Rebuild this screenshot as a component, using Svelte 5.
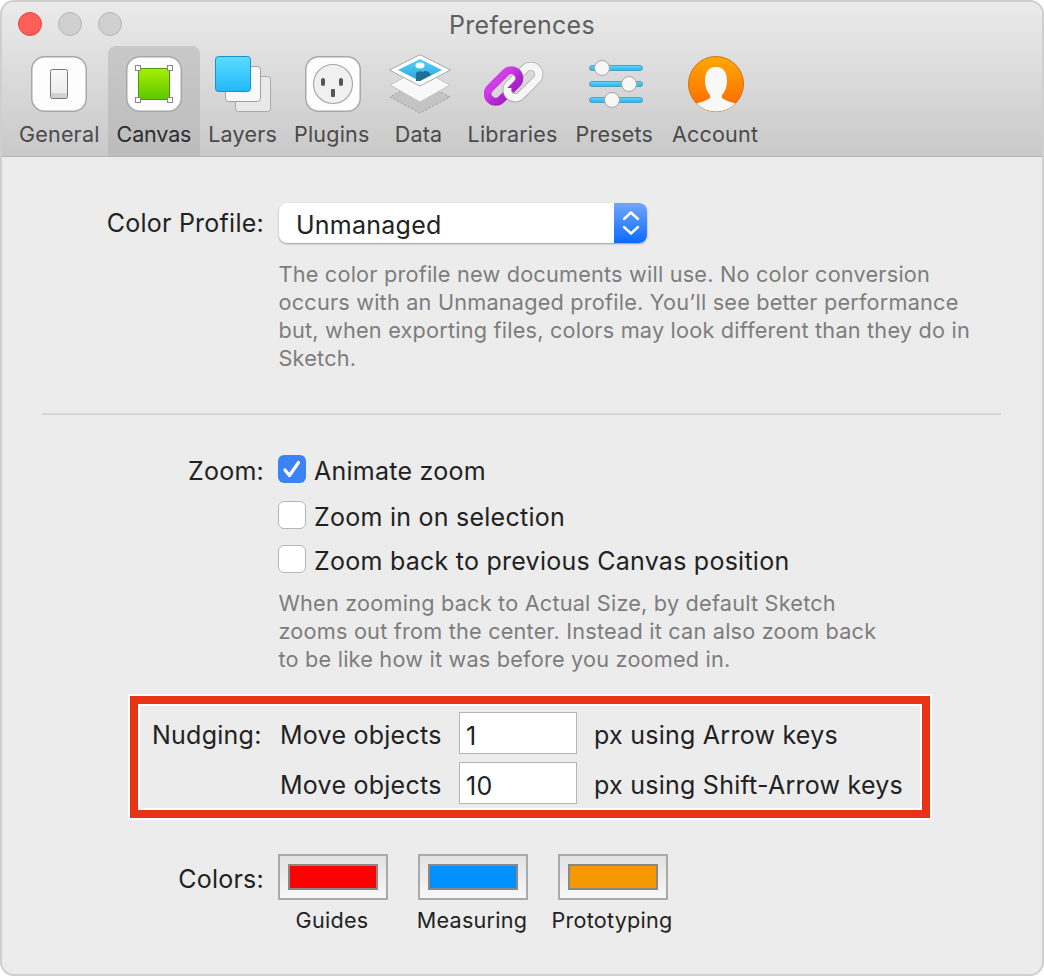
<script>
  const tabs = ["General", "Canvas", "Layers", "Plugins", "Data", "Libraries", "Presets", "Account"];
  const colors = [
    { name: "Guides", value: "#ff0000" },
    { name: "Measuring", value: "#0090ff" },
    { name: "Prototyping", value: "#f59700" }
  ];
</script>

<div class="window">
  <header class="toolbar">
    <div class="titlebar">
      <div class="lights">
        <span class="light close"></span>
        <span class="light"></span>
        <span class="light"></span>
      </div>
      <div class="title">Preferences</div>
    </div>
    <nav class="tabs">
      {#each tabs as tab}
        <div class="tab tab-{tab.toLowerCase()}" class:active={tab === "Canvas"}>
          <div class="icon">
            {#if tab === "General"}
              <svg width="56" height="56" viewBox="0 0 56 56">
                <defs>
                  <linearGradient id="sw" x1="0" y1="0" x2="0" y2="1">
                    <stop offset="0" stop-color="#fafafa" /><stop offset="0.8" stop-color="#ececec" /><stop offset="0.8" stop-color="#d4d4d4" /><stop offset="1" stop-color="#cfcfcf" />
                  </linearGradient>
                </defs>
                <rect x="0.75" y="0.75" width="54.5" height="54.5" rx="13" fill="#fdfdfd" stroke="#a8a8a8" stroke-width="1.5" />
                <rect x="19.5" y="13.5" width="17" height="29" rx="2" fill="url(#sw)" stroke="#777" />
              </svg>
            {:else if tab === "Canvas"}
              <svg width="56" height="56" viewBox="0 0 56 56">
                <defs>
                  <linearGradient id="gr" x1="0" y1="0" x2="0" y2="1">
                    <stop offset="0" stop-color="#a8ee00" /><stop offset="1" stop-color="#5cc800" />
                  </linearGradient>
                </defs>
                <rect x="0.75" y="0.75" width="54.5" height="54.5" rx="13" fill="#fdfdfd" stroke="#a8a8a8" stroke-width="1.5" />
                <rect x="12.5" y="12.5" width="31" height="31" fill="url(#gr)" stroke="#4f9a00" />
                <rect x="9.5" y="9.5" width="5" height="5" fill="#fff" stroke="#888" />
                <rect x="41.5" y="9.5" width="5" height="5" fill="#fff" stroke="#888" />
                <rect x="9.5" y="41.5" width="5" height="5" fill="#fff" stroke="#888" />
                <rect x="41.5" y="41.5" width="5" height="5" fill="#fff" stroke="#888" />
              </svg>
            {:else if tab === "Layers"}
              <svg width="56" height="56" viewBox="0 0 56 56">
                <defs>
                  <linearGradient id="bl" x1="0" y1="0" x2="0" y2="1">
                    <stop offset="0" stop-color="#5cdcff" /><stop offset="1" stop-color="#22b8fb" />
                  </linearGradient>
                </defs>
                <rect x="20.5" y="20.5" width="35" height="35" rx="3" fill="#e9e9e9" stroke="#a8a8a8" />
                <rect x="10.5" y="10.5" width="35" height="35" rx="3" fill="#f8f8f8" stroke="#a0a0a0" />
                <rect x="0.5" y="0.5" width="35" height="35" rx="3" fill="url(#bl)" stroke="#1c8fc8" />
              </svg>
            {:else if tab === "Plugins"}
              <svg class="nudge-1" width="56" height="56" viewBox="0 0 56 56">
                <rect x="0.75" y="0.75" width="54.5" height="54.5" rx="13" fill="#fdfdfd" stroke="#a8a8a8" stroke-width="1.5" />
                <circle cx="28" cy="28" r="19.5" fill="#f0f0f0" stroke="#aaa" stroke-width="1.2" />
                <rect x="16" y="22" width="4" height="8" rx="2" fill="#555" />
                <rect x="34" y="22" width="4" height="8" rx="2" fill="#555" />
                <rect x="26" y="33" width="4" height="8" rx="1" fill="#555" />
              </svg>
            {:else if tab === "Data"}
              <svg class="data-icon nudge-1" width="62" height="60" viewBox="0 0 62 60">
                <defs>
                  <linearGradient id="sky" x1="0" y1="0" x2="0" y2="1">
                    <stop offset="0" stop-color="#55d2f8" /><stop offset="1" stop-color="#2aa4dc" />
                  </linearGradient>
                </defs>
                <path d="M31 27 L61 43 L31 59 L1 43 Z" fill="#c4c4c4" stroke="#999" stroke-dasharray="2 2" />
                <path d="M31 15 L61 31 L31 48 L1 31 Z" fill="#f8f8f8" stroke="#c4c4c4" />
                <path d="M31 0.7 L61.5 16 L31 32 L0.5 16 Z" fill="#fff" stroke="#a8a8a8" />
                <path d="M31 5 L53 16 L31 27 L9 16 Z" fill="url(#sky)" />
                <ellipse cx="31" cy="11.5" rx="4.5" ry="3" fill="#fff" />
                <path d="M27 27 L27 19 Q30 16 34 18 Q38 15 42 21 L31 27 Z" fill="#1e6f92" />
              </svg>
            {:else if tab === "Libraries"}
              <svg class="libraries-icon nudge-1" width="60" height="46" viewBox="0 0 60 46">
                <defs>
                  <linearGradient id="pu" x1="0" y1="0" x2="0" y2="1">
                    <stop offset="0" stop-color="#d13ee8" /><stop offset="1" stop-color="#a922c8" />
                  </linearGradient>
                  <clipPath id="low"><rect x="18" y="26" width="26" height="20" /></clipPath>
                </defs>
                <g transform="rotate(-45 39 20)">
                  <rect x="20" y="12" width="38" height="16" rx="8" fill="none" stroke="#a8a8a8" stroke-width="9" />
                  <rect x="20" y="12" width="38" height="16" rx="8" fill="none" stroke="#f6f6f6" stroke-width="7.5" />
                </g>
                <g transform="rotate(-45 19.5 24)">
                  <rect x="0.5" y="16" width="38" height="16" rx="8" fill="none" stroke="url(#pu)" stroke-width="8" />
                </g>
                <g clip-path="url(#low)">
                  <g transform="rotate(-45 39 20)">
                    <rect x="20" y="12" width="38" height="16" rx="8" fill="none" stroke="#a8a8a8" stroke-width="9" />
                    <rect x="20" y="12" width="38" height="16" rx="8" fill="none" stroke="#f6f6f6" stroke-width="7.5" />
                  </g>
                </g>
              </svg>
            {:else if tab === "Presets"}
              <svg class="presets-icon nudge-2" width="54" height="48" viewBox="0 0 54 48">
                <defs>
                  <linearGradient id="tr" x1="0" y1="0" x2="0" y2="1">
                    <stop offset="0" stop-color="#62d8fb" /><stop offset="1" stop-color="#22b4f2" />
                  </linearGradient>
                </defs>
                {#each [[8, 13], [24, 40], [40, 23]] as [y, x]}
                  <rect x="0.5" y={y - 2.5} width="53" height="5" rx="2.5" fill="url(#tr)" stroke="#3d95bd" stroke-width="0.8" />
                  <circle cx={x} cy={y} r="7.5" fill="#f7f7f7" stroke="#a5a5a5" />
                {/each}
              </svg>
            {:else if tab === "Account"}
              <svg class="nudge-1" width="56" height="56" viewBox="0 0 56 56">
                <defs>
                  <linearGradient id="or" x1="0" y1="0" x2="0" y2="1">
                    <stop offset="0" stop-color="#ffa900" /><stop offset="1" stop-color="#ff6600" />
                  </linearGradient>
                  <clipPath id="disc"><circle cx="28" cy="28" r="27.5" /></clipPath>
                </defs>
                <circle cx="28" cy="28" r="27.5" fill="url(#or)" stroke="#c9741a" />
                <path clip-path="url(#disc)" d="M28 11 C20 11 17 17 17 25 C17 32 20 37 22 39 L22 42 C17 46 10 46 6 49 L8 56 L48 56 L50 49 C46 46 39 46 34 42 L34 39 C36 37 39 32 39 25 C39 17 36 11 28 11 Z" fill="#f8f8f8" />
              </svg>
            {/if}
          </div>
          <span class="tab-label">{tab}</span>
        </div>
      {/each}
    </nav>
  </header>

  <main class="content">
    <section class="row profile">
      <div class="label select-label">Color Profile:</div>
      <div class="control">
        <div class="select">
          <span class="select-value">Unmanaged</span>
          <span class="select-arrows">
            <svg width="20" height="30" viewBox="0 0 20 30" fill="none" stroke="#fff" stroke-width="2.4" stroke-linecap="round" stroke-linejoin="round">
              <path d="M3 11 L10 4.5 L17 11" />
              <path d="M3 19 L10 25.5 L17 19" />
            </svg>
          </span>
        </div>
        <p class="hint hint-profile">
          The color profile new documents will use. No color conversion<br />
          occurs with an Unmanaged profile. You’ll see better performance<br />
          but, when exporting files, colors may look different than they do in<br />
          Sketch.
        </p>
      </div>
    </section>

    <hr class="divider" />

    <section class="row zoom">
      <div class="label check-label">Zoom:</div>
      <div class="control">
        <div class="check first">
          <span class="box on">
            <svg width="28" height="28" viewBox="0 0 28 28" fill="none" stroke="#fff" stroke-width="3.2" stroke-linecap="round" stroke-linejoin="round">
              <path d="M7 15 L11.5 20.5 L20.5 7.5" />
            </svg>
          </span>
          <span class="check-text">Animate zoom</span>
        </div>
        <div class="check second"><span class="box"></span><span class="check-text">Zoom in on selection</span></div>
        <div class="check third"><span class="box"></span><span class="check-text">Zoom back to previous Canvas position</span></div>
        <p class="hint hint-zoom">
          When zooming back to Actual Size, by default Sketch<br />
          zooms out from the center. Instead it can also zoom back<br />
          to be like how it was before you zoomed in.
        </p>
      </div>
    </section>

    <section class="nudging">
      <div class="nudge-text">Nudging:</div>
      <div class="nudge-text">Move objects</div>
      <div class="input">1</div>
      <div class="nudge-text">px using Arrow keys</div>
      <div class="nudge-text second-line">Move objects</div>
      <div class="input">10</div>
      <div class="nudge-text">px using Shift-Arrow keys</div>
    </section>

    <section class="row colors">
      <div class="label colors-label">Colors:</div>
      <div class="swatches">
        {#each colors as color}
          <div class="swatch-item">
            <div class="swatch"><div class="fill" style:background={color.value}></div></div>
            <div class="swatch-name">{color.name}</div>
          </div>
        {/each}
      </div>
    </section>
  </main>
</div>

<style>
  :global(body) {
    background: #fff;
  }

  .window {
    box-sizing: border-box;
    width: 1044px;
    height: 976px;
    display: flex;
    flex-direction: column;
    border: 2px solid #cfcfcf;
    border-radius: 14px;
    overflow: hidden;
    background: #ececec;
    font-family: Inter, "Liberation Sans", sans-serif;
    font-size: 25px;
    letter-spacing: 0.25px;
    color: #222;
  }

  .toolbar {
    box-sizing: border-box;
    height: 155px;
    flex-shrink: 0;
    background: linear-gradient(#ebebeb, #c9c9c9);
    border-bottom: 1px solid #b2b2b2;
  }

  .titlebar {
    position: relative;
    height: 44px;
  }

  .lights {
    display: flex;
    gap: 16px;
    padding: 10px 0 0 16px;
  }

  .light {
    box-sizing: border-box;
    width: 24px;
    height: 24px;
    border-radius: 50%;
    background: #d0d0d0;
    border: 1px solid #b6b6b6;
  }

  .light.close {
    background: #ff5f57;
    border-color: #e2463f;
  }

  .title {
    position: absolute;
    top: 8px;
    left: 0;
    right: 0;
    text-align: center;
    color: #5f5f5f;
  }

  .tabs {
    display: flex;
    padding-left: 8px;
    height: 110px;
  }

  .tab {
    box-sizing: border-box;
    min-width: 80px;
    padding: 10px 9px 0;
    display: flex;
    flex-direction: column;
    align-items: center;
    border-radius: 8px 8px 0 0;
    color: #4a4a4a;
    letter-spacing: 0.2px;
  }

  .tab-general {
    padding-right: 8px;
  }

  .tab-layers {
    padding: 10px 8px 0;
  }

  .tab-account {
    padding-left: 10px;
  }

  .tab.active {
    background: linear-gradient(#c8c8c8, #bcbcbc);
    color: #2c2c2c;
    letter-spacing: -0.15px;
  }

  .icon {
    height: 56px;
    display: flex;
    justify-content: center;
  }

  .icon svg {
    display: block;
    flex-shrink: 0;
  }

  .icon .nudge-1 {
    transform: translateX(1px);
  }

  .icon .nudge-2 {
    transform: translateX(2px);
  }

  .icon .data-icon {
    margin-top: -2px;
  }

  .icon .libraries-icon {
    margin-top: 6px;
  }

  .icon .presets-icon {
    margin-top: 4px;
  }

  .tab-label {
    margin-top: 8px;
    font-size: 21.5px;
    line-height: 28px;
    white-space: nowrap;
  }

  .row {
    display: flex;
  }

  .label {
    box-sizing: border-box;
    width: 262px;
    margin-right: 15px;
    text-align: right;
    flex-shrink: 0;
  }

  .control {
    flex: 1;
  }

  .profile {
    padding-top: 46px;
  }

  .select-label {
    line-height: 40px;
  }

  .select {
    box-sizing: border-box;
    width: 368px;
    height: 40px;
    display: flex;
    justify-content: space-between;
    background: #fff;
    border-radius: 8px;
    box-shadow: 0 1px 2px rgba(0, 0, 0, 0.35);
    overflow: hidden;
  }

  .select-value {
    padding-left: 17px;
    line-height: 45px;
  }

  .select-arrows {
    width: 33px;
    display: flex;
    align-items: center;
    justify-content: center;
    background: linear-gradient(#72a6fb, #0a6bff);
  }

  .hint {
    margin: 0 0 0 -0.5px;
    font-size: 21.7px;
    line-height: 28px;
    letter-spacing: 0.2px;
    color: #7d7d7d;
  }

  .hint-profile {
    margin-top: 17px;
  }

  .divider {
    margin: 41px 41px 0 40px;
    border: 0;
    border-top: 2px solid #d6d6d6;
  }

  .zoom {
    padding-top: 40px;
  }

  .check-label {
    line-height: 28px;
    padding-top: 2px;
  }

  .check {
    display: flex;
    align-items: center;
    height: 28px;
    gap: 8px;
    white-space: nowrap;
  }

  .check-text {
    padding-top: 4px;
  }

  .second {
    margin-top: 18px;
  }

  .third {
    margin-top: 16px;
  }

  .box {
    box-sizing: border-box;
    width: 28px;
    height: 28px;
    margin-left: -1px;
    border-radius: 6px;
    background: #fff;
    border: 1px solid #b5b5b5;
    flex-shrink: 0;
  }

  .box.on {
    background: #3b82f6;
    border: 0;
  }

  .box svg {
    display: block;
  }

  .hint-zoom {
    margin-top: 16px;
  }

  .nudging {
    box-sizing: border-box;
    width: 800px;
    height: 122px;
    margin: 23px 0 0 128px;
    padding: 8px 0 0 14px;
    display: grid;
    grid-template-columns: 128px 179px 135px auto;
    grid-auto-rows: 42px;
    row-gap: 8px;
    align-items: center;
    border: 8px solid #e83415;
    outline: 2px solid #fff;
    box-shadow: inset 0 0 0 2px #fff;
  }

  .nudge-text {
    padding-top: 4px;
    white-space: nowrap;
  }

  .second-line {
    grid-column: 2;
  }

  .input {
    box-sizing: border-box;
    width: 118px;
    height: 42px;
    padding-left: 6px;
    line-height: 46px;
    background: #fff;
    border: 1px solid #b4b4b4;
  }

  .colors {
    padding-top: 36px;
  }

  .colors-label {
    line-height: 50px;
  }

  .swatches {
    display: flex;
    gap: 30px;
    margin-left: -1px;
  }

  .swatch-item {
    width: 110px;
    display: flex;
    flex-direction: column;
    align-items: center;
  }

  .swatch {
    box-sizing: border-box;
    width: 110px;
    height: 46px;
    padding: 8px;
    border: 2px solid #aaa;
    background: linear-gradient(#e2e2e2, #f7f7f7);
  }

  .fill {
    box-sizing: border-box;
    height: 26px;
    border: 2px solid #888;
  }

  .swatch-name {
    margin-top: 7px;
    padding-right: 2px;
    font-size: 21.6px;
    line-height: 26px;
    white-space: nowrap;
  }
</style>
